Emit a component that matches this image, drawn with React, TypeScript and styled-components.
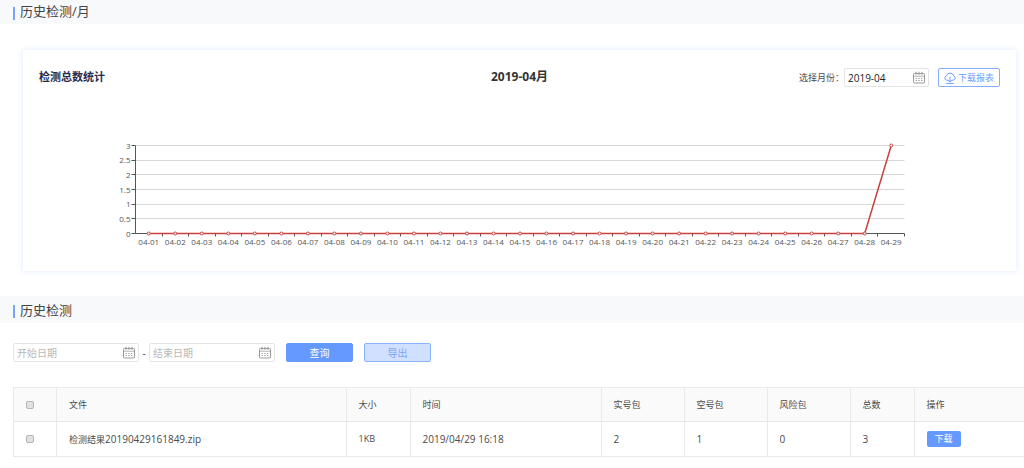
import React from "react";
import styled, { createGlobalStyle } from "styled-components";

const GlobalStyle = createGlobalStyle`
  *, *::before, *::after { box-sizing: border-box; }
  body {
    margin: 0;
    background: #fff;
    color: #4a4a4a;
    font: 9px/16px "Open Sans", "Noto Sans CJK SC", sans-serif;
  }
  button, input { font-family: inherit; }
`;

const Page = styled.main`
  overflow-x: hidden;
`;

const SectionBar = styled.header<{ $flush?: boolean }>`
  display: flex;
  align-items: center;
  height: ${(p) => (p.$flush ? 24 : 27)}px;
  padding: 0 13px ${(p) => (p.$flush ? 2 : 0)}px;
  background: #f7f9fb;
`;

const SectionTitle = styled.h2`
  display: flex;
  align-items: center;
  gap: 5px;
  margin: 0;
  font-size: 13px;
  line-height: 18px;
  font-weight: 400;
  color: #444;

  &::before {
    content: "";
    width: 2px;
    height: 13px;
    margin-top: 4px;
    background: #75a3ff;
  }
`;

const Card = styled.section`
  margin: 26px 8px 25px 23px;
  padding: 18px 0 12px;
  background: #fff;
  box-shadow: 0 0 6px rgba(90, 140, 255, 0.2);
`;

const CardHead = styled.div`
  display: grid;
  grid-template-columns: 1fr auto 1fr;
  align-items: center;
  padding: 0 16px;
`;

const CardTitle = styled.h3`
  margin: 0 0 2px;
  font-size: 11px;
  line-height: 16px;
  font-weight: 700;
  color: #1f2d50;
`;

const Period = styled.strong`
  margin-bottom: 2px;
  font-size: 12px;
  color: #333;
`;

const Tools = styled.div`
  display: flex;
  justify-content: flex-end;
  align-items: center;
`;

const Field = styled.span<{ $width: number }>`
  display: flex;
  align-items: center;
  width: ${(p) => p.$width}px;
  height: 19px;
  padding: 0 2px 0 3px;
  border: 1px solid #e4e4e4;
  border-radius: 2px;
  background: #fff;
`;

const DateInput = styled.input`
  flex: 1;
  min-width: 0;
  height: 16px;
  padding: 0;
  border: 0;
  outline: 0;
  background: transparent;
  font-size: 10px;
  color: #222;

  &::placeholder { color: #b8b8b8; opacity: 1; }
`;

const OutlineButton = styled.button`
  display: flex;
  align-items: center;
  gap: 2px;
  height: 19px;
  margin-left: 9px;
  padding: 0 5px;
  border: 1px solid #85adff;
  border-radius: 2px;
  background: #fff;
  font-size: 9px;
  color: #6f9dff;
`;

const Chart = styled.svg`
  display: block;
  width: 100%;
  height: auto;
  font-size: 8px;
  fill: #555;
`;

const Filters = styled.form`
  display: flex;
  align-items: center;
  padding: 20px 13px 25px;
`;

const Dash = styled.span`
  width: 10px;
  text-align: center;
  font-size: 10px;
`;

const ActionButton = styled.button<{ $light?: boolean }>`
  width: 67px;
  height: 19px;
  margin-left: 11px;
  padding: 0;
  border: 1px solid ${(p) => (p.$light ? "#8ab2ff" : "#6699ff")};
  border-radius: 2px;
  background: ${(p) => (p.$light ? "#d1e0ff" : "#6699ff")};
  font-size: 10px;
  line-height: 16px;
  color: ${(p) => (p.$light ? "#79a5fb" : "#fff")};
`;

const TableWrap = styled.div`
  padding-left: 13px;
`;

const Table = styled.table`
  width: 100%;
  table-layout: fixed;
  border-collapse: collapse;
  border-left: 1px solid #e9e9e9;
`;

const Col = styled.col<{ $width?: number }>`
  width: ${(p) => (p.$width ? `${p.$width}px` : "auto")};
`;

const cell = `
  height: 35px;
  padding: 0 12px;
  border: solid #e9e9e9;
  border-width: 1px 0 1px 1px;
  text-align: left;
  font-weight: 400;
  white-space: nowrap;
`;

const Th = styled.th`
  ${cell}
  height: 34px;
  background: #fafafa;
`;

const Td = styled.td`
  ${cell}
`;

const Num = styled.span`
  font-size: 10px;
`;

const Check = styled.input`
  display: block;
  appearance: none;
  width: 8px;
  height: 8px;
  margin: 0;
  border: 1px solid #b4b4b4;
  border-radius: 2px;
  background: #e2e2e2;

  &:checked { background: #6699ff; }
`;

const RowButton = styled.button`
  display: block;
  width: 34px;
  height: 16px;
  padding: 0;
  border: 0;
  border-radius: 2px;
  background: #6699ff;
  font-size: 9px;
  line-height: 14px;
  color: #fff;
`;

const CalendarIcon = () => (
  <svg width="13" height="13" viewBox="0 0 13 13" fill="none" stroke="#9a9a9a" aria-hidden="true">
    <rect x="0.5" y="2.5" width="11" height="9.5" rx="0.8" />
    <path d="M.5 5.2h11" strokeWidth="0.8" />
    <path d="M3 .8v3M6 .8v3M9 .8v3" />
    <path d="M2.7 7.5h1.3M5.4 7.5h1.3M8.1 7.5h1.3M2.7 9.5h1.3M5.4 9.5h1.3M8.1 9.5h1.3" />
  </svg>
);

const CloudIcon = () => (
  <svg width="12" height="12" viewBox="0 0 12 12" fill="none" stroke="#6f9dff" strokeLinecap="round" strokeLinejoin="round" aria-hidden="true">
    <path d="M3.5 8.2H2.8a2.2 2.2 0 0 1-.4-4.3 3.7 3.7 0 0 1 7.2 0 2.2 2.2 0 0 1-.4 4.3h-.7" />
    <path d="M6 5.2v4.500M4.3 8.3L6 10l1.7-1.7M2.5 11.4h7" />
  </svg>
);

const days = Array.from({ length: 29 }, (_, i) => `04-${String(i + 1).padStart(2, "0")}`);
const totals = days.map((_, i) => (i === 28 ? 3 : 0));
const ticks = [0, 0.5, 1, 1.5, 2, 2.5, 3];

const LEFT = 112.5;
const RIGHT = 881.5;
const BASE = 146.5;
const TOP = 58.5;
const step = (RIGHT - LEFT) / days.length;
const xAt = (i: number) => LEFT + step * (i + 0.5);
const yAt = (v: number) => BASE - ((BASE - TOP) * v) / 3;
const crisp = (n: number) => Math.floor(n) + 0.5;

const TotalsChart = () => (
  <Chart viewBox="0 0 993 172" role="img" aria-label="检测总数统计">
    {ticks.map((t) => (
      <g key={t}>
        {t > 0 && <line x1={LEFT} x2={RIGHT} y1={crisp(yAt(t))} y2={crisp(yAt(t))} stroke="#d8d8d8" />}
        <line x1={LEFT - 4} x2={LEFT} y1={crisp(yAt(t))} y2={crisp(yAt(t))} stroke="#555" />
        <text x={LEFT - 5} y={yAt(t) + 3} textAnchor="end">{t}</text>
      </g>
    ))}
    <path d={`M${LEFT} ${TOP}V${BASE}H${RIGHT}`} fill="none" stroke="#555" />
    {days.map((d, i) => (
      <g key={d}>
        <line x1={crisp(LEFT + step * (i + 1))} x2={crisp(LEFT + step * (i + 1))} y1={BASE} y2={BASE + 3} stroke="#555" />
        <text x={xAt(i)} y={BASE + 11} textAnchor="middle">{d}</text>
      </g>
    ))}
    <polyline points={totals.map((v, i) => `${xAt(i)},${yAt(v)}`).join(" ")} fill="none" stroke="#c9403c" strokeWidth="1.5" />
    {totals.map((v, i) => (
      <circle key={i} cx={xAt(i)} cy={yAt(v)} r="1.5" fill="#fff" stroke="#c9403c" />
    ))}
  </Chart>
);

export default function App() {
  return (
    <>
      <GlobalStyle />
      <Page>
        <SectionBar $flush>
          <SectionTitle>历史检测/月</SectionTitle>
        </SectionBar>
        <Card>
          <CardHead>
            <CardTitle>检测总数统计</CardTitle>
            <Period>2019-04月</Period>
            <Tools>
              <label htmlFor="month">选择月份：</label>
              <Field $width={85}>
                <DateInput id="month" defaultValue="2019-04" />
                <CalendarIcon />
              </Field>
              <OutlineButton type="button">
                <CloudIcon />
                下载报表
              </OutlineButton>
            </Tools>
          </CardHead>
          <TotalsChart />
        </Card>

        <SectionBar>
          <SectionTitle>历史检测</SectionTitle>
        </SectionBar>
        <Filters onSubmit={(e) => e.preventDefault()}>
          <Field $width={126}>
            <DateInput aria-label="开始日期" placeholder="开始日期" />
            <CalendarIcon />
          </Field>
          <Dash>-</Dash>
          <Field $width={126}>
            <DateInput aria-label="结束日期" placeholder="结束日期" />
            <CalendarIcon />
          </Field>
          <ActionButton type="submit">查询</ActionButton>
          <ActionButton type="button" $light>导出</ActionButton>
        </Filters>
        <TableWrap>
          <Table>
            <colgroup>
              <Col $width={43} />
              <Col />
              <Col $width={64} />
              <Col $width={191} />
              <Col $width={83} />
              <Col $width={83} />
              <Col $width={83} />
              <Col $width={64} />
              <Col $width={110} />
            </colgroup>
            <thead>
              <tr>
                <Th><Check type="checkbox" aria-label="全选" /></Th>
                <Th>文件</Th>
                <Th>大小</Th>
                <Th>时间</Th>
                <Th>实号包</Th>
                <Th>空号包</Th>
                <Th>风险包</Th>
                <Th>总数</Th>
                <Th>操作</Th>
              </tr>
            </thead>
            <tbody>
              <tr>
                <Td><Check type="checkbox" aria-label="选择文件" /></Td>
                <Td>检测结果<Num>20190429161849.zip</Num></Td>
                <Td>1KB</Td>
                <Td><Num>2019/04/29 16:18</Num></Td>
                <Td><Num>2</Num></Td>
                <Td><Num>1</Num></Td>
                <Td><Num>0</Num></Td>
                <Td><Num>3</Num></Td>
                <Td><RowButton type="button">下载</RowButton></Td>
              </tr>
            </tbody>
          </Table>
        </TableWrap>
      </Page>
    </>
  );
}
